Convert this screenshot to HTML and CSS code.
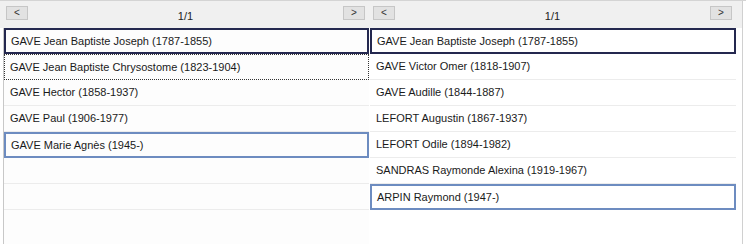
FILE: index.html
```html
<!DOCTYPE html>
<html lang="fr">
<head>
    <meta charset="UTF-8">
    <title>Descendance</title>
    <link rel="stylesheet" href="styles.css">
</head>
<body>
    <div class="lists">
        <div class="panel panel-left">
            <div class="pager">
                <button class="page-btn">&lt;</button>
                <span class="page-num">1/1</span>
                <button class="page-btn">&gt;</button>
            </div>
            <ul class="people">
                <li class="person current">GAVE Jean Baptiste Joseph (1787-1855)</li>
                <li class="person focused">GAVE Jean Baptiste Chrysostome (1823-1904)</li>
                <li class="person">GAVE Hector (1858-1937)</li>
                <li class="person">GAVE Paul (1906-1977)</li>
                <li class="person marked">GAVE Marie Agnès (1945-)</li>
                <li class="person"></li>
                <li class="person"></li>
            </ul>
        </div>
        <div class="panel panel-right">
            <div class="pager">
                <button class="page-btn">&lt;</button>
                <span class="page-num">1/1</span>
                <button class="page-btn">&gt;</button>
            </div>
            <ul class="people">
                <li class="person current">GAVE Jean Baptiste Joseph (1787-1855)</li>
                <li class="person">GAVE Victor Omer (1818-1907)</li>
                <li class="person">GAVE Audille (1844-1887)</li>
                <li class="person">LEFORT Augustin (1867-1937)</li>
                <li class="person">LEFORT Odile (1894-1982)</li>
                <li class="person">SANDRAS Raymonde Alexina (1919-1967)</li>
                <li class="person marked">ARPIN Raymond (1947-)</li>
            </ul>
        </div>
    </div>
</body>
</html>
```

FILE: styles.css
```css
body {
    margin: 0;
    font-family: "Liberation Sans", Arial, sans-serif;
    font-size: 11px;
    color: #1a1a1a;
    background-color: #ffffff;
}
.lists {
    display: flex;
    height: 244px;
    border-top: 1px solid #d4d4d4;
    box-sizing: border-box;
}
.panel {
    display: flex;
    flex-direction: column;
}
.panel-left {
    width: 369px;
}
.panel-right {
    width: 373px;
    border-right: 1px solid #d0d0d0;
}
.pager {
    display: flex;
    align-items: center;
    justify-content: space-between;
    height: 27px;
    background-color: #f0f0f0;
    padding: 0 4px 0 6px;
}
.panel-right .pager {
    padding: 0 10px 0 4px;
}
.page-btn {
    width: 22px;
    height: 14px;
    padding: 0;
    margin-top: -4px;
    font-family: "Liberation Sans", Arial, sans-serif;
    font-size: 10px;
    line-height: 12px;
    color: #333;
    background-color: #e2e2e2;
    border: 1px solid #c6c6c6;
}
.page-num {
    padding-top: 3px;
    color: #222;
}
.people {
    list-style: none;
    margin: 0;
    padding: 0;
    flex: 1;
}
.panel-left .people {
    margin-left: 3px;
    border-left: 1px solid #c8c8c8;
    background-color: #fdfdfd;
}
.panel-right .people {
    margin-left: 1px;
    margin-right: 6px;
}
.person {
    height: 25px;
    line-height: 25px;
    padding-left: 6px;
    border-bottom: 1px solid #ececec;
    white-space: nowrap;
}
.person.current {
    height: 22px;
    line-height: 22px;
    padding-left: 5px;
    border: 2px solid #24284f;
}
.person.focused {
    height: 24px;
    line-height: 24px;
    padding-left: 5px;
    border: 1px dotted #333;
}
.person.marked {
    height: 22px;
    line-height: 22px;
    padding-left: 5px;
    border: 2px solid #6d8cc0;
}
```
